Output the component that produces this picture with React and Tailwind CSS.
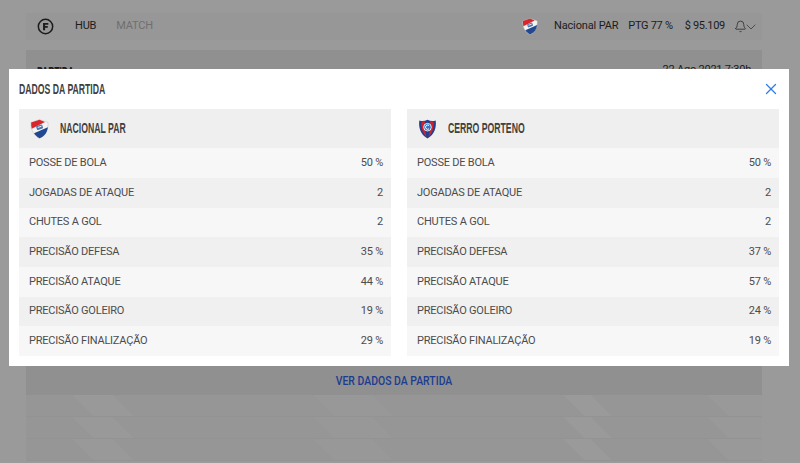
import React from "react";
import { X, Bell, ChevronDown } from "lucide-react";

const labels = [
  "POSSE DE BOLA",
  "JOGADAS DE ATAQUE",
  "CHUTES A GOL",
  "PRECISÃO DEFESA",
  "PRECISÃO ATAQUE",
  "PRECISÃO GOLEIRO",
  "PRECISÃO FINALIZAÇÃO",
];

const nacionalStats = ["50 %", "2", "2", "35 %", "44 %", "19 %", "29 %"];
const cerroStats = ["50 %", "2", "2", "37 %", "57 %", "24 %", "19 %"];

// no condensed face is installed, so the headings are squeezed
const headingClass =
  "inline-block origin-left scale-x-[0.62] whitespace-nowrap font-['Liberation_Sans',sans-serif] text-[14px] font-bold text-[#3f3f3f]";

const NacionalBadge = ({ className }) => (
  <svg viewBox="0 0 20 22" className={className}>
    <path d="M10 .6 19.4 3.8C19.8 11 17 17.8 10 21.4 3 17.8.2 11 .6 3.8Z" fill="#f4f4f4" stroke="#bdbdbd" strokeWidth=".5" />
    <path d="M10 .8 .8 3.9C.7 6.4.9 8.6 1.5 10.6L16 3.2Z" fill="#d9262c" />
    <path d="M19.2 9C18.6 14.6 15.6 18.8 10 21.2 7.4 19.8 5.4 18 4 15.8Z" fill="#22488f" />
    <rect x="6.6" y="6.8" width="7" height="4.6" rx="1" transform="rotate(-20 10 9.1)" fill="#4f75ad" />
    <path d="M8 9.4 12.2 7.9" stroke="#fff" strokeWidth="1" />
  </svg>
);

const CerroBadge = ({ className }) => (
  <svg viewBox="0 0 20 22" className={className}>
    <path d="M1 1.6C4 2.6 7 2.4 10 .8 13 2.4 16 2.6 19 1.6 20 9 18 17 10 21.4 2 17 0 9 1 1.6Z" fill="#23408f" />
    <path d="M3.4 2.8 7.2 2.4C6.6 8 7.4 14 9 19.6 4.6 15.6 2.8 9 3.4 2.8Z" fill="#d3222f" />
    <path d="M16.6 2.8 12.8 2.4C13.4 8 12.6 14 11 19.6 15.4 15.6 17.2 9 16.6 2.8Z" fill="#d3222f" />
    <circle cx="10" cy="9" r="4.2" fill="#2f78c8" stroke="#eef3fc" strokeWidth="1" />
    <path d="M11.6 7.2A2.3 2.3 0 1 0 11.6 10.8" fill="none" stroke="#fff" strokeWidth="1.1" />
  </svg>
);

const TeamStats = ({ name, badge, stats }) => (
  <div className="flex-1">
    <div className="flex h-[39.3px] items-center gap-[11px] bg-[#efefef] pl-[11px]">
      {badge}
      <span className={headingClass}>{name}</span>
    </div>
    {labels.map((label, i) => (
      <div
        key={label}
        className={`flex h-[29.67px] items-center justify-between pl-[10px] pr-2 text-[11px] tracking-[-0.22px] text-[#4c4c4c] ${i % 2 === 0 ? "bg-[#f7f7f7]" : "bg-[#f0f0f0]"}`}
      >
        <span>{label}</span>
        <span>{stats[i]}</span>
      </div>
    ))}
  </div>
);

const StripedRow = () => (
  <div className="h-[22px] border-b border-[#939393] bg-[linear-gradient(45deg,#969696_48px,#999999_48px,#999999_76px,#969696_76px,#969696_218px,#989898_218px,#989898_259px,#969696_259px,#969696_395px,#9a9a9a_395px,#9a9a9a_414px,#969696_414px,#969696_497px,#999999_497px,#999999_534px,#969696_534px)]" />
);

export default function App() {
  return (
    <div className="relative h-[463px] w-[800px] overflow-hidden bg-[#9a9a9a] font-['Roboto',sans-serif]">
      {/* page behind the backdrop */}
      <div className="mx-[26px] w-[736px] pt-[13px]">
        <div className="flex h-[27px] items-center justify-between bg-[#979797] pl-[11px] pr-[3px] text-[11px] text-[#1c1c1c]">
          <div className="flex items-center tracking-[-0.2px]">
            <svg viewBox="0 0 18 18" className="h-[17px] w-[17px]">
              <circle cx="9" cy="9" r="7.6" fill="none" stroke="#1c1c1c" strokeWidth="1.6" />
              <path d="M6.4 13V5.2H12V7.2H8.6V8.4H11.4V10.2H8.6V13Z" fill="#1c1c1c" />
            </svg>
            <span className="ml-[21px]">HUB</span>
            <span className="ml-5 text-[#6f6f6f]">MATCH</span>
          </div>
          <div className="flex items-center">
            <NacionalBadge className="h-[17px] w-[16px]" />
            <span className="ml-4 tracking-[-0.15px]">Nacional PAR</span>
            <span className="ml-[10px] tracking-[-0.3px]">PTG 77 %</span>
            <span className="ml-3 tracking-[-0.3px]">$ 95.109</span>
            <Bell className="ml-[9px] mr-[-4px] h-[13px] w-[13px]" strokeWidth={1.3} />
            <ChevronDown className="h-4 w-4 text-[#3a3a3a]" strokeWidth={1.2} />
          </div>
        </div>
        <div className="mt-[10px] flex h-[345px] flex-col justify-between bg-[#909090] px-[11px] pb-[3px]">
          <div className="flex items-start justify-between pt-[12px] text-[11px] tracking-[-0.22px] text-[#1c1c1c]">
            <span className="inline-block origin-left scale-x-[0.62] font-['Liberation_Sans',sans-serif] text-[14px] font-bold">PARTIDA</span>
            <span>22 Ago 2021 7:30h</span>
          </div>
          <div className="text-center">
            <span className="inline-block scale-x-[0.87] text-[12px] font-medium text-[#1d3c8f]">VER DADOS DA PARTIDA</span>
          </div>
        </div>
        <StripedRow />
        <StripedRow />
        <StripedRow />
      </div>

      {/* modal */}
      <div className="absolute left-[9px] top-[69px] h-[297px] w-[780px] bg-white px-[10px]">
        <div className="flex h-[40px] items-center justify-between">
          <h2 className={headingClass}>DADOS DA PARTIDA</h2>
          <X className="mr-[-1px] h-[18px] w-[18px] text-[#2f7de1]" strokeWidth={1.7} />
        </div>
        <div className="flex gap-4">
          <TeamStats name="NACIONAL PAR" badge={<NacionalBadge className="h-[20px] w-[19px]" />} stats={nacionalStats} />
          <TeamStats name="CERRO PORTENO" badge={<CerroBadge className="h-[20px] w-[19px]" />} stats={cerroStats} />
        </div>
      </div>
    </div>
  );
}
